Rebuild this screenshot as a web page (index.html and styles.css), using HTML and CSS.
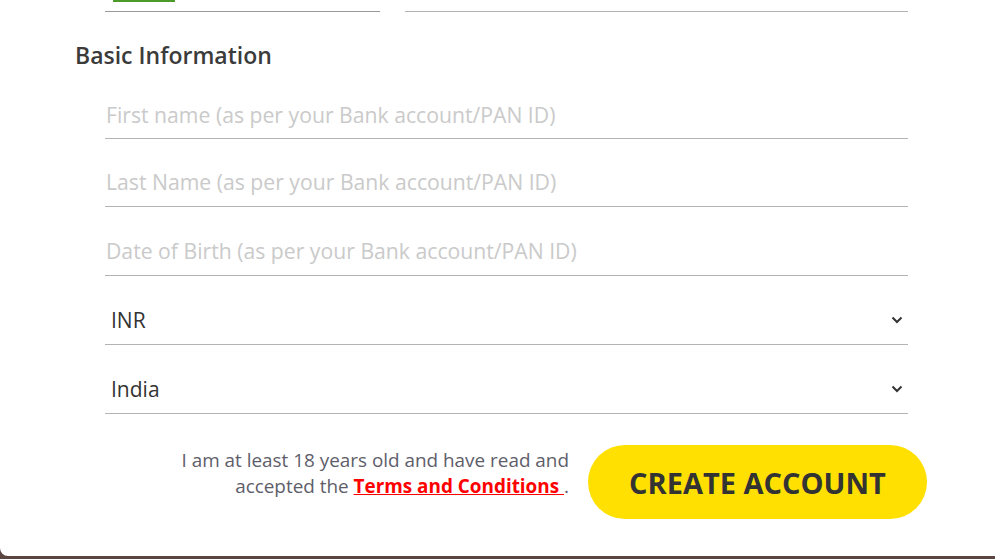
FILE: index.html
```html
<!DOCTYPE html>
<html lang="en">
<head>
<meta charset="utf-8">
<title>Create Account</title>
<link rel="stylesheet" href="styles.css">
</head>
<body>
<div class="card">
  <div class="top-row">
    <div class="top-field left"><span class="flag"></span></div>
    <div class="top-field right"></div>
  </div>
  <h2 class="section-title">Basic Information</h2>
  <div class="fields">
    <div class="field"><input class="input" type="text" placeholder="First name (as per your Bank account/PAN ID)"></div>
    <div class="field"><input class="input" type="text" placeholder="Last Name (as per your Bank account/PAN ID)"></div>
    <div class="field"><input class="input" type="text" placeholder="Date of Birth (as per your Bank account/PAN ID)"></div>
    <div class="field select">
      <span class="select-value">INR</span>
      <svg class="chevron" width="12" height="8" viewBox="0 0 12 8"><polyline points="1.5,1.5 6,6 10.5,1.5" fill="none" stroke="#333" stroke-width="2"/></svg>
    </div>
    <div class="field select">
      <span class="select-value">India</span>
      <svg class="chevron" width="12" height="8" viewBox="0 0 12 8"><polyline points="1.5,1.5 6,6 10.5,1.5" fill="none" stroke="#333" stroke-width="2"/></svg>
    </div>
  </div>
  <div class="submit-row">
    <p class="consent">I am at least 18 years old and have read and<br>accepted the <a class="terms" href="#">Terms and Conditions </a>.</p>
    <button class="create-btn" type="button">CREATE ACCOUNT</button>
  </div>
</div>
</body>
</html>
```

FILE: styles.css
```css
* { box-sizing: border-box; }
html, body { margin: 0; padding: 0; }
body {
  background: #5a4540;
  font-family: "Open Sans", "Noto Sans", sans-serif;
  height: 559px;
  overflow: hidden;
}
.card {
  background: #ffffff;
  height: 556px;
  border-bottom-left-radius: 8px;
  padding-left: 105px;
  padding-right: 87px;
}
.top-row {
  display: flex;
  gap: 25px;
  height: 12px;
}
.top-field {
  border-bottom: 1px solid #b3b3b3;
  position: relative;
}
.top-field.left { width: 275px; border-bottom-color: #999999; }
.top-field.right { flex: 1; }
.flag {
  position: absolute;
  left: 8px;
  top: 0;
  width: 62px;
  height: 2px;
  background: #4c9a2a;
}
.section-title {
  margin: 28px 0 0 -30px;
  font-size: 23px;
  line-height: 30px;
  font-weight: 600;
  color: #3b3b3b;
}
.fields {
  display: flex;
  flex-direction: column;
}
.field {
  height: 69px;
  border-bottom: 1px solid #b3b3b3;
  display: flex;
  align-items: flex-end;
  padding-bottom: 11px;
}
.fields .field:first-child { height: 69px; padding-bottom: 10px; }
.fields .field:nth-child(2) { height: 68px; }
.input {
  border: 0;
  outline: 0;
  padding: 0 0 0 1px;
  width: 100%;
  font-family: inherit;
  font-size: 21.2px;
  line-height: 26px;
  height: 26px;
  color: #333;
  background: transparent;
}
.input::placeholder { color: #cacaca; }
.select {
  justify-content: space-between;
  padding-left: 6px;
  padding-right: 5px;
}
.select-value {
  font-size: 21px;
  line-height: 26px;
  color: #333333;
}
.chevron { margin-bottom: 9px; }
.submit-row {
  display: flex;
  justify-content: flex-end;
  align-items: flex-start;
  gap: 19px;
  margin-top: 31px;
  margin-right: -19px;
}
.consent {
  margin: 2px 0 0;
  text-align: right;
  font-size: 18.9px;
  line-height: 26px;
  color: #5e5e6a;
}
.terms {
  color: #ff0000;
  font-weight: 700;
  text-decoration: underline;
}
.create-btn {
  width: 339px;
  height: 74px;
  border: 0;
  border-radius: 37px;
  background: #ffe000;
  color: #333333;
  font-family: inherit;
  font-size: 29px;
  font-weight: 700;
  padding: 0;
  cursor: pointer;
}
```
